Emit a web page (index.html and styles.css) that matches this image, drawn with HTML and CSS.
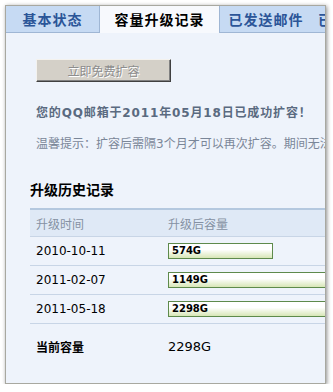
FILE: index.html
```html
<!DOCTYPE html>
<html lang="zh-CN">
<head>
  <meta charset="UTF-8" />
  <meta name="viewport" content="width=device-width, initial-scale=1.0" />
  <title>容量升级记录</title>
  <link rel="stylesheet" href="styles.css">
</head>
<body>
  <div class="window">
    <div class="tabs">
      <div class="tab tab-1">基本状态</div>
      <div class="tab tab-2 active">容量升级记录</div>
      <div class="tab tab-3">已发送邮件</div>
      <div class="tab tab-4">已</div>
    </div>

    <div class="content">
      <div class="upgrade">
        <button class="upgrade-btn" disabled>立即免费扩容</button>
        <div class="msg">您的QQ邮箱于2011年05月18日已成功扩容！</div>
        <div class="tip">温馨提示：扩容后需隔3个月才可以再次扩容。期间无法再次扩容，请耐心等待。</div>
      </div>

      <div class="history-title">升级历史记录</div>
      <table class="history">
        <colgroup>
          <col class="col-date">
          <col class="col-size">
        </colgroup>
        <tr class="head">
          <td>升级时间</td>
          <td>升级后容量</td>
        </tr>
        <tr>
          <td>2010-10-11</td>
          <td><div class="bar" style="width: 100px">574G</div></td>
        </tr>
        <tr>
          <td>2011-02-07</td>
          <td><div class="bar" style="width: 204px">1149G</div></td>
        </tr>
        <tr>
          <td>2011-05-18</td>
          <td><div class="bar" style="width: 410px">2298G</div></td>
        </tr>
        <tr class="total">
          <td class="label">当前容量</td>
          <td>2298G</td>
        </tr>
      </table>
    </div>
  </div>
</body>
</html>
```

FILE: styles.css
```css
body {
  margin: 0;
  background-color: #fff;
  font-family: 'DejaVu Sans', 'Noto Sans CJK SC', sans-serif;
  font-size: 12px;
}

.window {
  margin: 5px 0 0 5px;
  width: 319px;
  height: 377px;
  border: 1px solid #a8a8a0;
  background-color: #eef3fb;
  box-shadow: 1px 1px 4px rgba(0,0,0,0.45);
  overflow: hidden;
}

.tabs {
  display: flex;
  height: 26px;
}

.tab {
  flex-shrink: 0;
  height: 26px;
  line-height: 26px;
  font-family: 'Noto Sans CJK SC', sans-serif;
  font-size: 14px;
  font-weight: bold;
  letter-spacing: 1px;
  color: #2b5598;
  background-color: #c6daf3;
  border-bottom: 1px solid #9fb6d4;
  text-align: center;
}

.tab-1 {
  width: 93px;
  border-right: 1px solid #9fb6d4;
}

.tab-2 {
  width: 119px;
}

.tab-3 {
  width: 92px;
  border-left: 1px solid #9fb6d4;
}

.tab-4 {
  width: 40px;
  text-align: left;
  padding-left: 6px;
}

.tab.active {
  color: #000;
  background-color: #f7f9fd;
  border-bottom-color: #f7f9fd;
}

.content {
  padding-left: 24px;
}

.upgrade {
  padding: 27px 0 0 6px;
}

.upgrade-btn {
  display: block;
  width: 135px;
  height: 23px;
  padding: 0;
  background-color: #d4d0c8;
  border: 1px solid;
  border-color: #f4f2ee #404040 #404040 #f4f2ee;
  box-shadow: inset -1px -1px 0 #808080;
  font-family: 'Noto Sans CJK SC', sans-serif;
  font-size: 12px;
  color: #8d8d8d;
  text-shadow: 1px 1px 0 #fff;
}

.msg {
  margin-top: 21px;
  font-weight: bold;
  font-size: 12px;
  color: #5a6a80;
  letter-spacing: 0.85px;
  white-space: nowrap;
}

.tip {
  margin-top: 14px;
  font-size: 12px;
  color: #7a8698;
  white-space: nowrap;
}

.history-title {
  margin-top: 28px;
  font-family: 'Noto Sans CJK SC', sans-serif;
  font-size: 14px;
  font-weight: bold;
  color: #000;
}

.history {
  margin-top: 9px;
  width: 420px;
  table-layout: fixed;
  border-collapse: collapse;
  border-top: 2px solid #b4c8df;
}

.history .col-date {
  width: 132px;
}

.history td {
  height: 28px;
  padding: 0 0 0 6px;
  border-bottom: 1px solid #c8d5e6;
  color: #000;
  font-size: 12px;
  white-space: nowrap;
  overflow: hidden;
}

.history .head td {
  height: 26px;
  background-color: #dfe9f6;
  color: #8591a3;
  font-family: 'Noto Sans CJK SC', sans-serif;
}

.bar {
  height: 14px;
  line-height: 14px;
  padding-left: 3px;
  border: 1px solid #5e8a4c;
  background: linear-gradient(to bottom, #ffffff 40%, #d7e6b6);
  font-size: 10px;
  font-weight: bold;
  color: #000;
}

.history .total td {
  height: 44px;
  border-bottom: none;
  font-size: 13px;
}

.history .total .label {
  font-family: 'Noto Sans CJK SC', sans-serif;
  font-weight: bold;
  font-size: 12px;
}
```
